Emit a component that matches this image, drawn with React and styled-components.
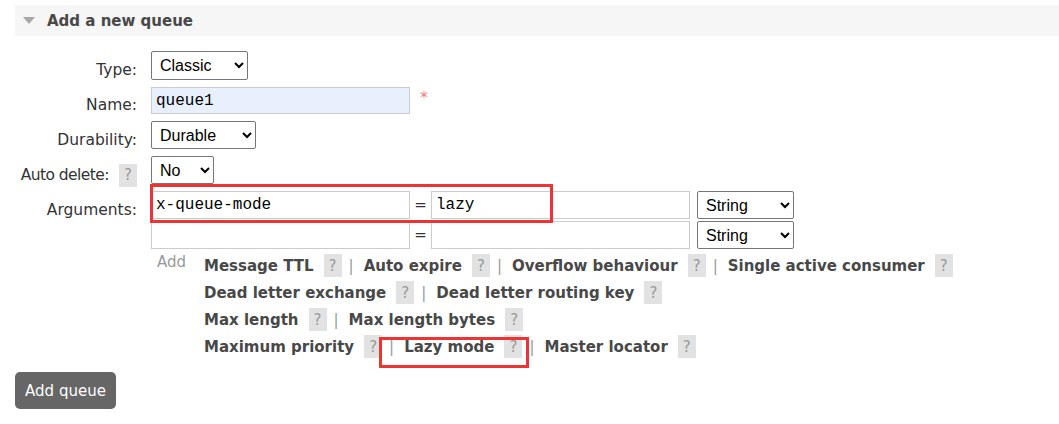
import React from "react";
import styled, { createGlobalStyle } from "styled-components";

const GlobalStyle = createGlobalStyle`
  body {
    margin: 0;
    background: #fff;
    font-family: "DejaVu Sans", Verdana, sans-serif;
    color: #484848;
  }
`;

const Page = styled.div`
  position: relative;
  padding: 5px 0 0 15px;
  width: 1059px;
  height: 424px;
  box-sizing: border-box;
  overflow: hidden;
`;

const SectionHeader = styled.div`
  height: 31px;
  background: #f6f6f6;
  display: flex;
  align-items: center;
  padding-left: 8px;
  gap: 12px;
`;

const Arrow = styled.span`
  width: 0;
  height: 0;
  border-left: 6px solid transparent;
  border-right: 6px solid transparent;
  border-top: 7px solid #a8a8a8;
`;

const Title = styled.h2`
  margin: 0;
  font-size: 15px;
  font-weight: bold;
  color: #484848;
`;

const Form = styled.div`
  display: grid;
  grid-template-columns: 122px 1fr;
  column-gap: 14px;
  row-gap: 7px;
  margin-top: 15px;
  align-items: start;
`;

const Label = styled.div`
  display: flex;
  justify-content: flex-end;
  align-items: center;
  gap: 10px;
  height: 18px;
  padding-top: ${(p) => p.$top || 10}px;
  font-size: 15.5px;
  line-height: 20px;
  letter-spacing: ${(p) => (p.$tight ? "-0.55px" : "normal")};
  color: #333;
  white-space: nowrap;
`;

const Help = styled.span`
  display: inline-flex;
  justify-content: center;
  align-items: center;
  width: 18px;
  height: 23px;
  background: #e2e2e2;
  color: #999;
  font-size: 15px;
  font-weight: normal;
  letter-spacing: normal;
  flex-shrink: 0;
`;

const Select = styled.select`
  height: ${(p) => p.$h || 28}px;
  width: ${(p) => p.$w}px;
  font-family: "Liberation Sans", Arial, sans-serif;
  font-size: 16px;
  color: #000;
  background: #fff;
  border: 1px solid #767676;
  border-radius: 2px;
  padding: 0 4px;
`;

const Field = styled.div`
  display: flex;
  align-items: center;
  gap: 10px;
`;

const TextInput = styled.input`
  box-sizing: border-box;
  width: ${(p) => p.$w || 259}px;
  height: ${(p) => p.$h || 28}px;
  border: 1px solid #ccc;
  background: ${(p) => (p.$filled ? "#e8f0fe" : "#fff")};
  font-family: "Liberation Mono", "Courier New", monospace;
  font-size: 16px;
  color: #000;
  padding: 0 4px;
  outline: none;
`;

const Required = styled.span`
  color: #f08080;
  font-size: 16px;
  margin-top: -6px;
`;

const ArgList = styled.div`
  display: flex;
  flex-direction: column;
  gap: 2px;
`;

const ArgRow = styled.div`
  display: flex;
  align-items: center;
`;

const Equals = styled.span`
  width: 21px;
  text-align: center;
  font-size: 15px;
  color: #333;
`;

const TypeSelect = styled(Select)`
  margin-left: 7px;
`;

const AddBlock = styled.div`
  display: flex;
  margin-top: 1px;
`;

const AddLabel = styled.span`
  width: 53px;
  padding-left: 6px;
  box-sizing: border-box;
  font-size: 15px;
  line-height: 27px;
  color: #999;
  margin-top: -3px;
`;

const Lines = styled.div`
  display: flex;
  flex-direction: column;
`;

const Line = styled.div`
  display: flex;
  align-items: center;
  height: 27px;
`;

const LinkItem = styled.span`
  display: inline-flex;
  align-items: center;
  gap: 10px;
  font-size: 15px;
  font-weight: bold;
  color: #484848;
`;

const Pipe = styled.span`
  color: #999;
  font-size: 15px;
  margin: 0 10px 0 7px;
`;

const Button = styled.button`
  margin-top: 12px;
  width: 101px;
  height: 37px;
  background: #666;
  color: #fff;
  border: none;
  border-radius: 5px;
  font-family: "DejaVu Sans", Verdana, sans-serif;
  font-size: 15px;
  padding: 0;
`;

const Highlight = styled.div`
  position: absolute;
  border: 3px solid #ee3333;
  box-sizing: border-box;
  left: ${(p) => p.$x}px;
  top: ${(p) => p.$y}px;
  width: ${(p) => p.$w}px;
  height: ${(p) => p.$h}px;
  pointer-events: none;
`;

const lines = [
  ["Message TTL", "Auto expire", "Overflow behaviour", "Single active consumer"],
  ["Dead letter exchange", "Dead letter routing key"],
  ["Max length", "Max length bytes"],
  ["Maximum priority", "Lazy mode", "Master locator"],
];

export default function App() {
  return (
    <Page>
      <GlobalStyle />
      <SectionHeader>
        <Arrow />
        <Title>Add a new queue</Title>
      </SectionHeader>

      <Form>
        <Label>Type:</Label>
        <Field>
          <Select $w={97} $h={29} defaultValue="classic">
            <option value="classic">Classic</option>
            <option value="quorum">Quorum</option>
          </Select>
        </Field>

        <Label $top={9}>Name:</Label>
        <Field>
          <TextInput $filled $h={27} defaultValue="queue1" />
          <Required>*</Required>
        </Field>

        <Label>Durability:</Label>
        <Field>
          <Select $w={105} defaultValue="durable">
            <option value="durable">Durable</option>
            <option value="transient">Transient</option>
          </Select>
        </Field>

        <Label $tight>
          Auto delete: <Help>?</Help>
        </Label>
        <Field>
          <Select $w={63} defaultValue="no">
            <option value="no">No</option>
            <option value="yes">Yes</option>
          </Select>
        </Field>

        <Label>Arguments:</Label>
        <ArgList>
          <ArgRow>
            <TextInput defaultValue="x-queue-mode" />
            <Equals>=</Equals>
            <TextInput defaultValue="lazy" />
            <TypeSelect $w={97} defaultValue="string">
              <option value="string">String</option>
            </TypeSelect>
          </ArgRow>
          <ArgRow>
            <TextInput />
            <Equals>=</Equals>
            <TextInput />
            <TypeSelect $w={97} defaultValue="string">
              <option value="string">String</option>
            </TypeSelect>
          </ArgRow>
          <AddBlock>
            <AddLabel>Add</AddLabel>
            <Lines>
              {lines.map((line, i) => (
                <Line key={i}>
                  {line.map((name, j) => (
                    <React.Fragment key={name}>
                      {j > 0 && <Pipe>|</Pipe>}
                      <LinkItem>
                        {name} <Help>?</Help>
                      </LinkItem>
                    </React.Fragment>
                  ))}
                </Line>
              ))}
            </Lines>
          </AddBlock>
        </ArgList>
      </Form>

      <Button>Add queue</Button>

      <Highlight $x={150} $y={184} $w={403} $h={39} />
      <Highlight $x={379} $y={337} $w={150} $h={31} />
    </Page>
  );
}
